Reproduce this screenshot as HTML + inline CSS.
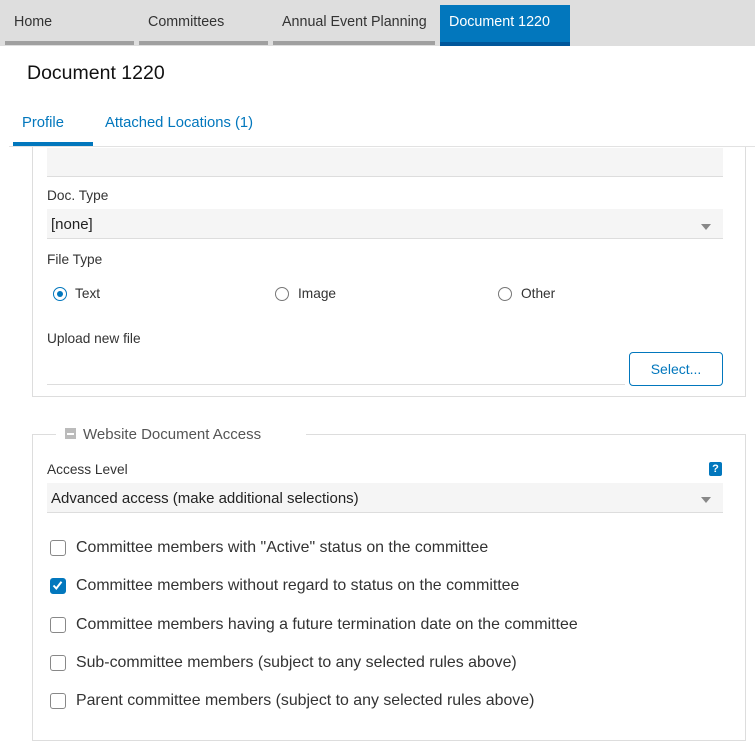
<!DOCTYPE html>
<html><head><meta charset="utf-8"><style>
*{box-sizing:border-box;margin:0;padding:0}
body{width:755px;height:752px;overflow:hidden;background:#fff;font-family:"Liberation Sans",sans-serif;color:#222;position:relative}
.a{position:absolute;white-space:nowrap}
.tab{position:absolute;top:0;height:46px;font-size:14.3px;padding:14px 0 0 9px;color:#333}
.tab .bar{position:absolute;left:0;right:0;bottom:1px;height:4px;background:#a0a0a0}
.lbl{font-size:13.7px;color:#333}
.cb{position:absolute;left:50px;width:16px;height:16px;border:1.5px solid #888;border-radius:3px;background:#fff}
.ct{position:absolute;left:76px;font-size:15.9px;color:#333;white-space:nowrap}
.rad{position:absolute;width:14px;height:14px;border:1.5px solid #777;border-radius:50%;top:287px}
</style></head><body>
<div class="a" style="left:0;top:0;width:755px;height:46px;background:#dedede"></div>
<div class="tab" style="left:5px;width:129px">Home<div class="bar"></div></div>
<div class="tab" style="left:139px;width:129px">Committees<div class="bar"></div></div>
<div class="tab" style="left:273px;width:162px">Annual Event Planning<div class="bar"></div></div>
<div class="tab" style="left:440px;width:130px;top:5px;height:41px;padding-top:9px;background:#0277bd;color:#fff">Document 1220<div class="bar" style="background:#01579b;bottom:0"></div></div>

<div class="a" style="left:27px;top:62px;font-size:19.5px;color:#111">Document 1220</div>
<div class="a" style="left:22px;top:115px;font-size:14.8px;color:#0277bd">Profile</div>
<div class="a" style="left:105px;top:115px;font-size:14.8px;color:#0277bd">Attached Locations (1)</div>
<div class="a" style="left:13px;top:142px;width:80px;height:4px;background:#0277bd"></div>
<div class="a" style="left:9px;top:146px;width:746px;height:1px;background:#e2e2e2"></div>

<div class="a" style="left:32px;top:147px;width:714px;height:250px;border:1px solid #ddd;border-top:none"></div>
<div class="a" style="left:47px;top:148px;width:676px;height:29px;background:#f5f5f5;border-bottom:1px solid #ddd"></div>
<div class="a lbl" style="left:47px;top:188px">Doc. Type</div>
<div class="a" style="left:47px;top:209px;width:676px;height:30px;background:#f5f5f5;border-bottom:1px solid #ddd"></div>
<div class="a" style="left:51px;top:216px;font-size:15px;color:#222">[none]</div>
<div class="a" style="left:701px;top:224px;border-left:5px solid transparent;border-right:5px solid transparent;border-top:6px solid #888"></div>
<div class="a lbl" style="left:47px;top:252px">File Type</div>
<div class="rad" style="left:53px;border-color:#0277bd"><div style="position:absolute;left:2.5px;top:2.5px;width:6px;height:6px;border-radius:50%;background:#0277bd"></div></div>
<div class="a lbl" style="left:75px;top:286px">Text</div>
<div class="rad" style="left:275px"></div>
<div class="a lbl" style="left:298px;top:286px">Image</div>
<div class="rad" style="left:498px"></div>
<div class="a lbl" style="left:521px;top:286px">Other</div>
<div class="a lbl" style="left:47px;top:331px">Upload new file</div>
<div class="a" style="left:47px;top:384px;width:578px;height:1px;background:#ddd"></div>
<div class="a" style="left:629px;top:352px;width:94px;height:34px;border:1px solid #0277bd;border-radius:4px;color:#0277bd;font-size:14px;text-align:center;line-height:32px">Select...</div>

<div class="a" style="left:32px;top:434px;width:714px;height:307px;border:1px solid #ddd"></div>
<div class="a" style="left:56px;top:424px;width:250px;height:20px;background:#fff"></div>
<div class="a" style="left:65px;top:428px;width:11px;height:11px;background:#bbb"><div style="position:absolute;left:2px;top:5px;width:7px;height:2px;background:#fff"></div></div>
<div class="a" style="left:83px;top:426px;font-size:15px;color:#555">Website Document Access</div>
<div class="a lbl" style="left:47px;top:462px">Access Level</div>
<div class="a" style="left:709px;top:462px;width:13px;height:14px;background:#0277bd;border-radius:2px;color:#fff;font-size:11px;font-weight:bold;text-align:center;line-height:14px">?</div>
<div class="a" style="left:47px;top:483px;width:676px;height:30px;background:#f5f5f5;border-bottom:1px solid #ddd"></div>
<div class="a" style="left:51px;top:490px;font-size:15px;color:#222">Advanced access (make additional selections)</div>
<div class="a" style="left:701px;top:497px;border-left:5px solid transparent;border-right:5px solid transparent;border-top:6px solid #888"></div>

<div class="cb" style="top:540px"></div><div class="ct" style="top:539px">Committee members with "Active" status on the committee</div>
<div class="cb" style="top:578px;background:#0277bd;border-color:#0277bd"><svg width="13" height="13" viewBox="0 0 13 13" style="position:absolute;left:0;top:0"><path d="M2.5 6.5 L5.3 9.5 L10.5 2.8" stroke="#fff" stroke-width="2" fill="none"/></svg></div><div class="ct" style="top:577px">Committee members without regard to status on the committee</div>
<div class="cb" style="top:617px"></div><div class="ct" style="top:616px">Committee members having a future termination date on the committee</div>
<div class="cb" style="top:655px"></div><div class="ct" style="top:654px">Sub-committee members (subject to any selected rules above)</div>
<div class="cb" style="top:693px"></div><div class="ct" style="top:692px">Parent committee members (subject to any selected rules above)</div>
</body></html>
